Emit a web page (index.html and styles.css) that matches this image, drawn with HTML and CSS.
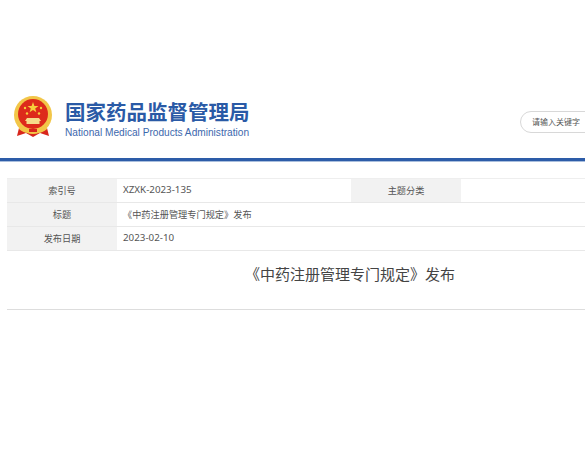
FILE: index.html
```html
<!DOCTYPE html>
<html lang="zh-CN">
<head>
  <meta charset="UTF-8" />
  <title>《中药注册管理专门规定》发布</title>
  <link rel="stylesheet" href="styles.css">
</head>
<body>
  <div class="page">
    <div class="header">
      <div class="logo">
        <svg class="emblem" width="38" height="42" viewBox="0 0 38 42">
          <path d="M5 32 L3 40 L12 37 L19 41 L26 37 L35 40 L33 32 Z" fill="#d8261c"/>
          <circle cx="19" cy="19" r="19" fill="#f2c648"/>
          <circle cx="19" cy="18" r="15" fill="#dd2a1b"/>
          <polygon points="19,6 20.4,10 24.5,10 21.2,12.4 22.4,16.3 19,14 15.6,16.3 16.8,12.4 13.5,10 17.6,10" fill="#f6cf3c"/>
          <circle cx="11" cy="12" r="1.2" fill="#f6cf3c"/>
          <circle cx="27" cy="12" r="1.2" fill="#f6cf3c"/>
          <circle cx="13" cy="17.5" r="1.2" fill="#f6cf3c"/>
          <circle cx="25" cy="17.5" r="1.2" fill="#f6cf3c"/>
          <path d="M13 22 H25 L27 25 H25.5 V28 H12.5 V25 H11 Z" fill="#f6dc8a"/>
          <path d="M5 28 C10 37 28 37 33 28 L33 33 C27 39 11 39 5 33 Z" fill="#f2c648"/>
          <rect x="15" y="33" width="8" height="3" fill="#d8261c"/>
        </svg>
        <div class="logo-text">
          <div class="logo-cn">国家药品监督管理局</div>
          <div class="logo-en">National Medical Products Administration</div>
        </div>
      </div>
      <div class="search">请输入关键字</div>
    </div>
    <div class="blue-line"></div>

    <div class="content">
      <table class="info">
        <tr>
          <td class="label">索引号</td>
          <td class="value num">XZXK-2023-135</td>
          <td class="label">主题分类</td>
          <td class="value"></td>
        </tr>
        <tr>
          <td class="label">标题</td>
          <td class="value" colspan="3">《中药注册管理专门规定》发布</td>
        </tr>
        <tr>
          <td class="label">发布日期</td>
          <td class="value num" colspan="3">2023-02-10</td>
        </tr>
      </table>
      <h1 class="title">《中药注册管理专门规定》发布</h1>
    </div>
  </div>
</body>
</html>
```

FILE: styles.css
```css
html, body {
  overflow: hidden;
}
body {
  margin: 0;
  height: 468px;
  background: #fff;
  color: #333;
  font-family: "Liberation Sans", "Noto Sans CJK SC", sans-serif;
}
.page {
  width: 700px;
}
.header {
  display: flex;
  align-items: flex-start;
  justify-content: space-between;
  height: 158px;
  padding: 96px 48px 0 14px;
  box-sizing: border-box;
}
.logo {
  display: flex;
  gap: 13px;
}
.emblem {
  display: block;
}
.logo-cn {
  font-family: "Noto Sans CJK SC", sans-serif;
  font-size: 20.5px;
  line-height: 26px;
  margin-top: 2px;
  font-weight: 700;
  color: #2a5aa6;
  white-space: nowrap;
}
.logo-en {
  font-family: "Liberation Sans", sans-serif;
  font-size: 10.15px;
  line-height: 14px;
  margin-top: 2px;
  color: #3d68ad;
  white-space: nowrap;
}
.search {
  width: 132px;
  height: 22px;
  box-sizing: border-box;
  margin-top: 15px;
  padding-left: 11px;
  border: 1px solid #d8d8d8;
  border-radius: 11px;
  font-family: "Noto Sans CJK SC", sans-serif;
  font-size: 8px;
  line-height: 20px;
  color: #555;
}
.blue-line {
  height: 3px;
  background: #2d5ca8;
  border-bottom: 1px solid #a9bedd;
}
.content {
  padding: 16px 0 0 7px;
}
.info {
  border-collapse: collapse;
  table-layout: fixed;
  width: 688px;
  font-size: 9.2px;
  font-family: "Noto Sans", "Noto Sans CJK SC", sans-serif;
}
.info td {
  box-sizing: border-box;
  height: 24px;
  padding: 0 0 2px;
  border-top: 1px solid #eee;
  border-bottom: 1px solid #e8e8e8;
  color: #555;
}
.info .label {
  width: 110px;
  background: #f2f2f2;
  text-align: center;
}
.info .value {
  width: 234px;
  padding-left: 6px;
}
.info .num {
  font-size: 9.8px;
}
.title {
  width: 686px;
  margin: 0;
  height: 59px;
  box-sizing: border-box;
  padding-top: 11px;
  border-bottom: 1px solid #ddd;
  font-family: "Noto Sans CJK SC", sans-serif;
  font-size: 15px;
  line-height: 24px;
  font-weight: 400;
  text-align: center;
  color: #444;
}
```
